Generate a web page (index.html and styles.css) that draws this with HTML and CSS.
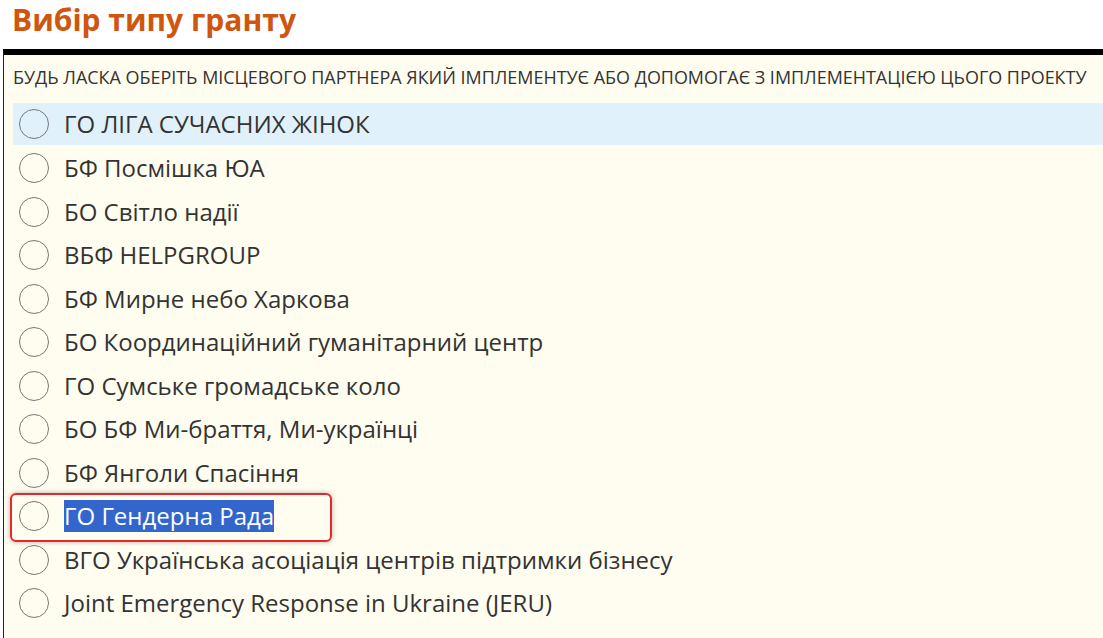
FILE: index.html
```html
<!DOCTYPE html>
<html lang="uk">
<head>
<meta charset="utf-8">
<link rel="stylesheet" href="styles.css">
</head>
<body>
<h1 class="title">Вибір типу гранту</h1>
<div class="panel">
  <div class="question">БУДЬ ЛАСКА ОБЕРІТЬ МІСЦЕВОГО ПАРТНЕРА ЯКИЙ ІМПЛЕМЕНТУЄ АБО ДОПОМОГАЄ З ІМПЛЕМЕНТАЦІЄЮ ЦЬОГО ПРОЕКТУ</div>
  <ul class="options">
    <li class="option hover"><span class="radio"></span><span class="label">ГО ЛІГА СУЧАСНИХ ЖІНОК</span></li>
    <li class="option"><span class="radio"></span><span class="label">БФ Посмішка ЮА</span></li>
    <li class="option"><span class="radio"></span><span class="label">БО Світло надії</span></li>
    <li class="option"><span class="radio"></span><span class="label">ВБФ HELPGROUP</span></li>
    <li class="option"><span class="radio"></span><span class="label">БФ Мирне небо Харкова</span></li>
    <li class="option"><span class="radio"></span><span class="label">БО Координаційний гуманітарний центр</span></li>
    <li class="option"><span class="radio"></span><span class="label">ГО Сумське громадське коло</span></li>
    <li class="option"><span class="radio"></span><span class="label">БО БФ Ми-браття, Ми-українці</span></li>
    <li class="option"><span class="radio"></span><span class="label">БФ Янголи Спасіння</span></li>
    <li class="option marked"><span class="radio"></span><span class="label selected">ГО Гендерна Рада</span><span class="mark"></span></li>
    <li class="option"><span class="radio"></span><span class="label">ВГО Українська асоціація центрів підтримки бізнесу</span></li>
    <li class="option"><span class="radio"></span><span class="label">Joint Emergency Response in Ukraine (JERU)</span></li>
  </ul>
</div>
</body>
</html>
```
FILE: styles.css
```css
html, body {
  margin: 0;
  padding: 0;
  background: #ffffff;
  overflow: hidden;
}
body {
  font-family: "Open Sans", "Noto Sans", sans-serif;
  color: #333333;
}
.title {
  margin: 0;
  padding: 0 0 0 12px;
  height: 47px;
  box-sizing: border-box;
  font-size: 30px;
  line-height: 40px;
  font-weight: 700;
  color: #d0550e;
}
.panel {
  margin-left: 3px;
  margin-top: 2px;
  width: 1130px;
  height: 600px;
  box-sizing: border-box;
  background: #fffdef;
  border-top: 6px solid #000000;
  border-left: 1px solid #222222;
  padding: 0 0 0 9px;
}
.question {
  padding-top: 10px;
  height: 48px;
  box-sizing: border-box;
  font-size: 17.95px;
  line-height: 24px;
  color: #333333;
  white-space: nowrap;
}
.options {
  list-style: none;
  margin: 0;
  padding: 0;
}
.option {
  position: relative;
  display: flex;
  align-items: center;
  height: 43.5px;
  padding-left: 6px;
  box-sizing: border-box;
}
.option.hover {
  background: #e1f1fb;
  height: 42px;
  margin-bottom: 1.5px;
}
.radio {
  flex: none;
  width: 30px;
  height: 30px;
  border: 1px solid #777777;
  border-radius: 50%;
  box-sizing: border-box;
  background: transparent;
}
.label {
  margin-left: 15px;
  font-size: 24px;
  line-height: 32px;
  color: #333333;
  white-space: nowrap;
}
.label.selected {
  background: #3366cc;
  color: #ffffff;
}
.mark {
  position: absolute;
  left: -3px;
  top: -2px;
  width: 322px;
  height: 49px;
  border: 2px solid #e8262b;
  border-radius: 6px;
  box-sizing: border-box;
  box-shadow: 0 0 5px rgba(0, 0, 0, 0.3);
  pointer-events: none;
}
```
